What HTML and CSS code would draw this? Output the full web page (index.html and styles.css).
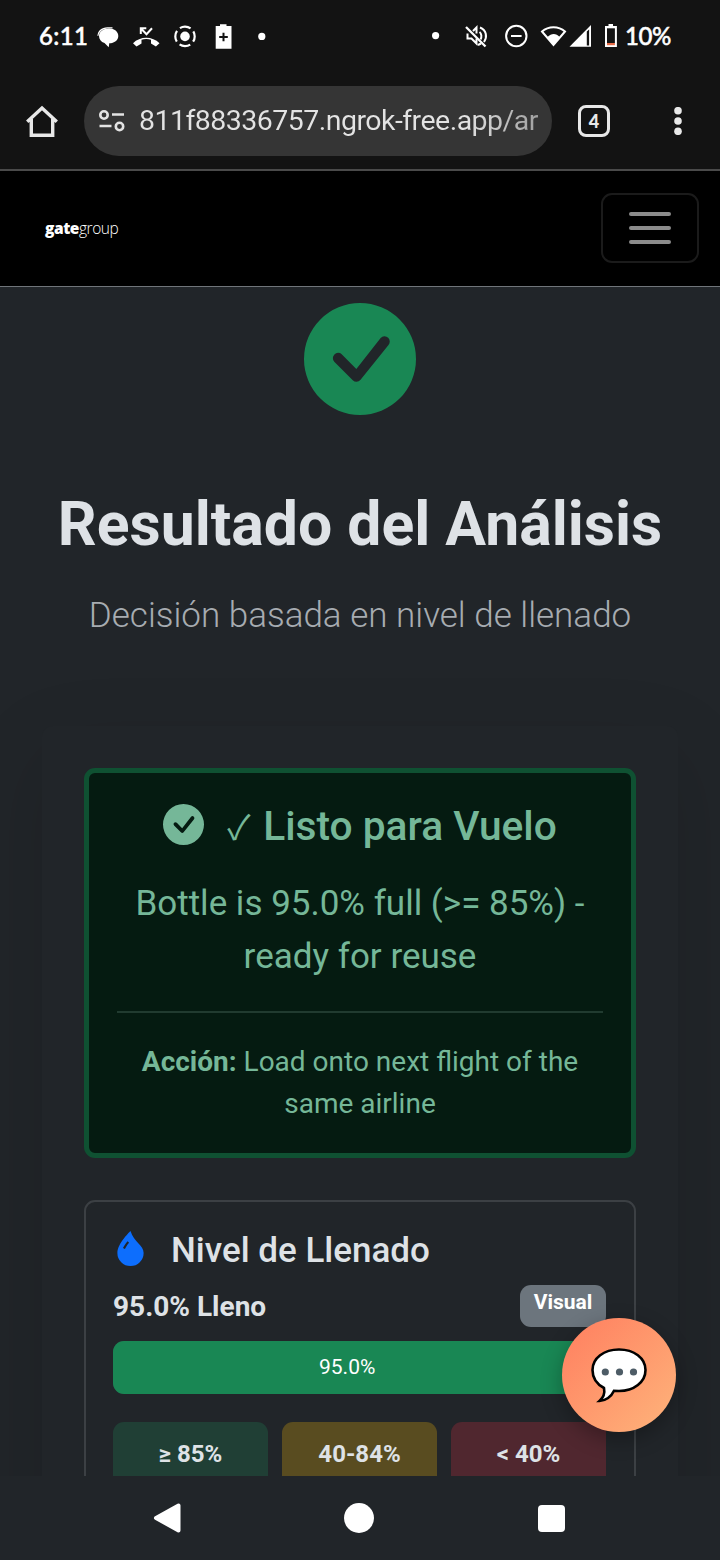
FILE: index.html
```
<!DOCTYPE html>
<html lang="es">
<head>
<meta charset="utf-8">
<title>Resultado del Análisis</title>
<link rel="stylesheet" href="styles.css">
</head>
<body>
<div class="phone">
  <header class="status">
    <span class="clock">6:11</span>
    <svg class="status-icons" width="180" height="32" viewBox="92 20 180 32" fill="#fff">
      <path d="M97.5 36c0-5 4-8.600 10-8.800h5v1.200h-5c-4.500.4-8 2.500-9.200 7.600z"/>
      <path d="M109 28.500c5.500 0 9.300 3.200 9.300 7.400 0 4.300-4 7.300-9 7.300l-.6 4-4.200-4.200c-3.500-1.100-5.500-3.800-5.500-7 0-4.300 4-7.500 10-7.500z"/>
      <path d="M133 43.300c7-7.400 19.500-7.400 26.500 0l-3.600 3.300-4.900-3v-3.800q-4.700-1.500-9.500 0v3.800l-5 3z"/>
      <path d="M140.800 34v-5.700h5.500M141.500 29l5 5.200 5.500-6" fill="none" stroke="#fff" stroke-width="2"/>
      <circle cx="185" cy="36.400" r="4.800"/>
      <circle cx="185" cy="36.400" r="9.700" fill="none" stroke="#fff" stroke-width="2.200" stroke-dasharray="11.240 4" stroke-dashoffset="5.620"/>
      <path d="M220 26v-1.800h6.500V26h5v22.700H215.700V26z"/>
      <path d="M223.500 32.800v8.500M219.200 37h8.600" stroke="#131313" stroke-width="2"/>
      <circle cx="261.800" cy="36.400" r="3.600"/>
    </svg>
    <svg class="status-icons right" width="192" height="32" viewBox="428 20 192 32" fill="#fff">
      <circle cx="435.600" cy="35.600" r="3.600"/>
      <g fill="none" stroke="#fff" stroke-width="2">
        <path d="M466 27l19.500 19.500" stroke-width="2.300"/>
        <path d="M467.500 33.500v5h4l5 5v-5M473 31l3.500-3.500v6M479.500 32c2 1.500 2.500 5 1 7.500M480 27.500c6.500 2.500 7.500 9.500 4 14.500M478 45l3-1.500"/>
        <circle cx="516.300" cy="36" r="10.200"/>
        <path d="M511 36h10.600"/>
        <path d="M542 31.500c6.500-5.800 16.500-5.800 23 0L553.500 45z"/>
      </g>
      <path d="M547.500 37c4-4 8.500-4 12.200 0l-6.200 8.500z"/>
      <path d="M569.500 46.700L591 25v21.700z"/>
      <path d="M586.800 31.500v14h2.300V29.500z" fill="#131313"/>
      <path d="M605 26h3.500v-2h4.500v2h3.900v21H605z"/>
      <path d="M607 28.300h7.900V43H607z" fill="#131313"/>
      <path d="M607 43h7.900v2.200H607z" fill="#e56a45"/>
    </svg>
    <span class="percent">10%</span>
  </header>

  <div class="toolbar">
    <svg class="home" width="32" height="32" viewBox="0 0 32 32" fill="none" stroke="#e8e8e8" stroke-width="3.400"><path d="M1.200 16.800L16 3l14.800 13.800M5.300 14v16.300h21.400V14"/></svg>
    <div class="url">
      <svg width="28" height="24" viewBox="0 0 28 24" fill="none" stroke="#e3e3e3" stroke-width="2.600"><circle cx="6" cy="6" r="3.700"/><path d="M14 5.500h12M1.500 17h12"/><circle cx="21.500" cy="17.500" r="3.700"/></svg>
      <span class="address">811f88336757.ngrok-free.app/ar</span>
    </div>
    <span class="tabs">4</span>
    <svg class="menu" width="8" height="28" viewBox="0 0 8 28" fill="#e8e8e8"><circle cx="4" cy="3.700" r="3.800"/><circle cx="4" cy="14" r="3.800"/><circle cx="4" cy="24.300" r="3.800"/></svg>
  </div>

  <nav class="navbar">
    <span class="brand"><b>gate</b><span>group</span></span>
    <span class="toggler"><i></i><i></i><i></i></span>
  </nav>

  <main class="page">
    <svg class="hero-icon" width="112" height="112" viewBox="0 0 16 16" fill="#198754"><path d="M16 8A8 8 0 1 1 0 8a8 8 0 0 1 16 0m-3.970-3.030a.75.75 0 0 0-1.080.022L7.477 9.417 5.384 7.323a.75.75 0 0 0-1.060 1.060L6.970 11.030a.75.75 0 0 0 1.079-.020l3.992-4.990a.75.75 0 0 0-.010-1.050z"/></svg>
    <h1>Resultado del Análisis</h1>
    <p class="subtitle">Decisión basada en nivel de llenado</p>

    <div class="card">
      <section class="alert">
        <h2>
          <svg width="41" height="41" viewBox="0 0 16 16" fill="#75b798"><path d="M16 8A8 8 0 1 1 0 8a8 8 0 0 1 16 0m-3.970-3.030a.75.75 0 0 0-1.080.022L7.477 9.417 5.384 7.323a.75.75 0 0 0-1.060 1.060L6.970 11.030a.75.75 0 0 0 1.079-.020l3.992-4.990a.75.75 0 0 0-.010-1.050z"/></svg>
          <span class="tick">✓</span><span class="verdict">Listo para Vuelo</span>
        </h2>
        <p class="reason">Bottle is 95.0% full (&gt;= 85%) -<br>ready for reuse</p>
        <hr>
        <p class="action"><b>Acción:</b> Load onto next flight of the<br>same airline</p>
      </section>

      <section class="level">
        <h3><svg width="35" height="35" viewBox="0 0 16 16" fill="#0d6efd"><path fill-rule="evenodd" d="M8 16a6 6 0 0 0 6-6c0-1.655-1.122-2.904-2.432-4.362C10.254 4.176 8.750 2.503 8 0c0 0-6 5.686-6 10a6 6 0 0 0 6 6M6.646 4.646l.708.708c-.290.290-1.128 1.311-1.907 2.870l-.894-.448c.820-1.641 1.717-2.753 2.093-3.130"/></svg><span>Nivel de Llenado</span></h3>
        <div class="level-row"><b>95.0% Lleno</b><span class="badge">Visual</span></div>
        <div class="progress"><div class="bar" style="width:95%">95.0%</div></div>
        <div class="ranges">
          <div class="range ok">≥ 85%</div>
          <div class="range mid">40-84%</div>
          <div class="range low">&lt; 40%</div>
        </div>
      </section>
    </div>
  </main>

  <footer class="sysnav">
    <svg width="28" height="32" viewBox="0 0 28 32" fill="#fff" stroke="#fff" stroke-width="4" stroke-linejoin="round"><path d="M3 16L25.500 3.500v25z"/></svg>
    <span class="dot"></span>
    <span class="square"></span>
  </footer>

  <div class="chat">
    <svg width="58" height="56" viewBox="0 0 58 56"><path d="M29 2.500C44 2.500 55.500 11 55.500 23S44 44 29 44l-5-.2C21.500 49.500 15.500 54 9.500 54c4-3.500 5.500-8 4.500-13C6.500 37 2.500 30.500 2.500 23 2.500 11 14 2.500 29 2.500z" fill="#fff" stroke="#000" stroke-width="2.600"/><g fill="#4d5c66"><circle cx="15.300" cy="25" r="3.600"/><circle cx="29.500" cy="25" r="3.600"/><circle cx="43.500" cy="25" r="3.600"/></g></svg>
  </div>
</div>
</body>
</html>
```
FILE: styles.css
```
* { box-sizing: border-box; }
body { margin: 0; font-family: Roboto, sans-serif; background: #212529; color: #dee2e6; }
h1, h2, h3, p { margin: 0; white-space: nowrap; }
svg { display: block; flex: none; }
.phone { position: relative; width: 720px; height: 1560px; overflow: hidden; display: flex; flex-direction: column; }

.status { height: 72px; flex: none; background: #131313; display: flex; align-items: center; padding-left: 39px; color: #fff; font: 500 24px/32px Lato, sans-serif; -webkit-text-stroke: .5px #fff; }
.status svg { -webkit-text-stroke: 0; }
.clock { width: 53px; letter-spacing: .4px; }
.status-icons.right { margin-left: 156px; }
.percent { margin-left: 5px; letter-spacing: -.4px; }

.toolbar { height: 99px; flex: none; background: #131313; border-bottom: 2px solid #4a4a4a; display: flex; align-items: center; padding-left: 26px; }
.url { width: 468px; height: 70px; margin-left: 26px; border-radius: 35px; background: #353535; display: flex; align-items: center; padding-left: 14px; overflow: hidden; }
.address { margin-left: 13px; font: 400 28.500px/40px Roboto, sans-serif; letter-spacing: -.53px; white-space: nowrap; background: linear-gradient(90deg, #e3e3e3 82%, #a0a0a0); background-clip: text; -webkit-background-clip: text; color: transparent; }
.tabs { width: 32px; height: 32px; margin-left: 26px; border: 3px solid #e8e8e8; border-radius: 8px; color: #e8e8e8; font: 900 18px/26px Lato, sans-serif; text-align: center; }
.menu { margin-left: 64px; }

.navbar { height: 116px; flex: none; background: #000; border-bottom: 1px solid #70757a; display: flex; align-items: center; justify-content: space-between; padding: 0 21px 2px 45px; }
.brand { display: flex; color: #fff; font: 300 15.500px/20px "Open Sans", sans-serif; letter-spacing: -.45px; }
.brand b { font-weight: 800; }
.toggler { width: 98px; height: 70px; border: 2px solid #1b1b1b; border-radius: 11px; display: flex; flex-direction: column; align-items: center; justify-content: center; gap: 10px; }
.toggler i { width: 42px; height: 4px; border-radius: 2px; background: #8c8c8c; }

.page { height: 1189px; flex: none; overflow: hidden; padding: 16px 42px 0; }
.hero-icon { margin: 0 auto; }
h1 { margin-top: 74px; font-size: 60.700px; line-height: 72px; font-weight: 700; text-align: center; }
.subtitle { margin-top: 29px; font-size: 35px; line-height: 52px; font-weight: 300; text-align: center; color: #a7acb1; }
.card { margin-top: 84px; height: 1200px; padding: 42px; border-radius: 11px; background: #212529; box-shadow: 0 28px 84px rgba(0, 0, 0, .13); }

.alert { height: 390px; padding: 28px; border: 5px solid #0f5132; border-radius: 11px; background: #051b11; color: #75b798; }
h2 { display: flex; justify-content: center; align-items: center; height: 49px; font-size: 40.700px; font-weight: 500; }
h2 svg { margin-bottom: 3px; }
.tick { width: 27px; margin-left: 23px; font: 400 34px/49px "Noto Sans CJK JP", sans-serif; }
.verdict { margin-left: 9px; }
.reason { margin-top: 28px; font-size: 35px; line-height: 52.500px; text-align: center; }
hr { height: 2px; margin: 28px 0; border: 0; background: #213b30; }
.action { font-size: 28px; line-height: 42px; text-align: center; }

.level { margin-top: 42px; height: 600px; padding: 27px 28px 27px 27px; border: 2px solid #3c4044; border-radius: 11px; }
.level h3 { display: flex; align-items: center; height: 42px; font-size: 35px; font-weight: 500; }
.level h3 svg { margin-bottom: 3px; }
.level h3 span { margin-left: 23px; }
.level-row { display: flex; justify-content: space-between; margin-top: 14px; font-size: 28px; line-height: 43px; }
.badge { width: 86px; height: 42px; border-radius: 11px; background: #6c757d; color: #fff; font-size: 21px; font-weight: 700; line-height: 34px; text-align: center; }
.progress { height: 53px; margin-top: 13px; border-radius: 11px; background: #343a40; overflow: hidden; }
.bar { height: 100%; background: #198754; color: #fff; font-size: 21px; line-height: 52px; text-align: center; }
.ranges { display: grid; grid-template-columns: repeat(3, 1fr); gap: 14px; margin-top: 28px; }
.range { height: 100px; padding-top: 14px; border-radius: 11px; font-size: 24px; line-height: 36px; font-weight: 700; text-align: center; }
.ok { background: #203f35; }
.mid { background: #594c20; }
.low { background: #50272f; }

.sysnav { height: 84px; flex: none; background: #212529; display: flex; align-items: center; padding-left: 153px; }
.dot { width: 30px; height: 30px; margin-left: 163px; border-radius: 50%; background: #fff; }
.square { width: 27px; height: 27px; margin-left: 164px; border-radius: 4px; background: #fff; }

.chat { position: absolute; left: 562px; top: 1318px; width: 114px; height: 114px; border-radius: 50%; background: linear-gradient(135deg, #ff7e5f, #feb47b); box-shadow: 0 7px 21px rgba(0, 0, 0, .3); display: flex; align-items: center; justify-content: center; }
```
